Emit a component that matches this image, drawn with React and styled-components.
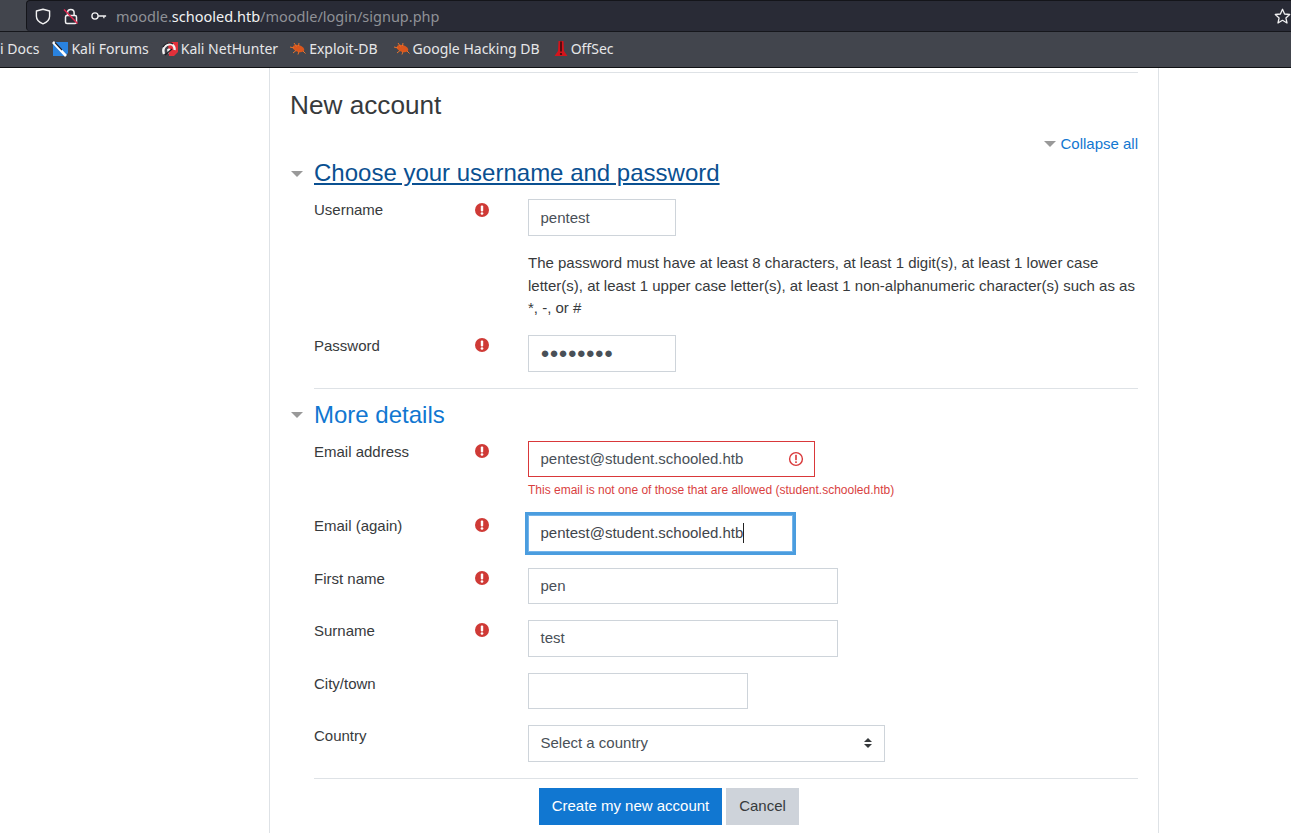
import React from "react";
import styled, { createGlobalStyle } from "styled-components";

const GlobalStyle = createGlobalStyle`
  html, body {
    margin: 0;
    padding: 0;
    height: 100%;
    overflow: hidden;
    background: #fff;
  }
  * { box-sizing: border-box; }
`;

const Page = styled.div`
  width: 1291px;
  height: 833px;
  overflow: hidden;
  display: flex;
  flex-direction: column;
  font-family: "Liberation Sans", Arial, sans-serif;
  font-size: 15px;
  color: #373a3c;
`;

/* browser chrome */
const Toolbar = styled.div`
  height: 32px;
  flex-shrink: 0;
  background: #42454d;
  padding-left: 26px;
  border-bottom: 1px solid #16171c;
`;
const UrlBar = styled.div`
  height: 31px;
  background: #292b36;
  border: 1px solid #14151a;
  border-bottom: none;
  border-right: none;
  border-radius: 4px 0 0 4px;
  display: flex;
  align-items: center;
  padding-left: 7px;
`;
const IconSlot = styled.span`
  display: flex;
  width: ${(p) => p.$w}px;
  justify-content: center;
  flex-shrink: 0;
`;
const Url = styled.div`
  margin-left: 9px;
  flex: 1;
  font-family: "Noto Sans", sans-serif;
  font-size: 14.5px;
  color: #8f9196;
  white-space: nowrap;
`;
const UrlHost = styled.span`
  color: #f2f2f3;
`;
const Bookmarks = styled.div`
  height: 36px;
  flex-shrink: 0;
  background: #42454d;
  border-bottom: 1px solid #101114;
  display: flex;
  align-items: center;
  overflow: hidden;
  padding-bottom: 2px;
`;
const Bookmark = styled.div`
  display: flex;
  align-items: center;
  gap: 3px;
  margin-left: ${(p) => p.$gap}px;
  font-family: "Noto Sans", sans-serif;
  font-size: 14px;
  color: #e6e7e9;
  white-space: nowrap;
`;

/* moodle page */
const Card = styled.main`
  margin-left: 269px;
  width: 890px;
  flex: 1;
  border-left: 1px solid #dee2e6;
  border-right: 1px solid #dee2e6;
  padding: 4px 20px 0;
`;
const TopRule = styled.hr`
  margin: 0;
  border: none;
  border-top: 1px solid #dee2e6;
`;
const PageTitle = styled.h2`
  margin: 17px 0 0;
  font-size: 26.2px;
  font-weight: 400;
  line-height: 30px;
  color: #373a3c;
`;
const CollapseRow = styled.div`
  display: flex;
  justify-content: flex-end;
  align-items: center;
  gap: 4px;
  margin-top: 12px;
  height: 22px;
  color: #1177d1;
`;
const Caret = styled.span`
  width: 0;
  height: 0;
  border-left: 6.5px solid transparent;
  border-right: 6.5px solid transparent;
  border-top: 6px solid #999;
  margin-top: 1px;
`;
const SectionHead = styled.div`
  display: flex;
  align-items: center;
  gap: 11px;
  margin-top: ${(p) => p.$top}px;
  height: 30px;
  padding-left: 1px;
`;
const SectionTitle = styled.h3`
  margin: 0;
  font-size: 24px;
  font-weight: 400;
  line-height: 30px;
  color: ${(p) => (p.$active ? "#0a5091" : "#1177d1")};
  text-decoration: ${(p) => (p.$active ? "underline" : "none")};
  text-underline-offset: 2px;
`;
const Row = styled.div`
  display: flex;
  margin-left: 24px;
  margin-top: ${(p) => p.$top}px;
`;
const Label = styled.div`
  width: 160.5px;
  line-height: 22px;
`;
const Req = styled.div`
  width: 53.5px;
  height: 21px;
  display: flex;
  align-items: center;
`;
const Field = styled.div`
  flex: 1;
  min-width: 0;
`;
const Input = styled.div`
  position: relative;
  width: ${(p) => p.$w}px;
  height: ${(p) => p.$h || 37}px;
  border: 1px solid #ced4da;
  background: #fff;
  padding: 0 11.5px ${(p) => (p.$h ? 0 : 1)}px;
  display: flex;
  align-items: center;
  color: #495057;
  white-space: nowrap;
`;
const ErrorInput = styled(Input)`
  border-color: #d9383a;
`;
const FocusInput = styled(Input)`
  border-color: #74b4ea;
  box-shadow: 0 0 0 3px #4b9ddf;
  color: #3f454b;
`;
const Dots = styled.span`
  font-size: 15px;
`;
const Cursor = styled.span`
  width: 1px;
  height: 20px;
  background: #222;
  flex-shrink: 0;
`;
const TrailIcon = styled.span`
  position: absolute;
  right: 10px;
  top: 9px;
  display: flex;
`;
const Help = styled.p`
  margin: 0;
  line-height: 22.5px;
  color: #373a3c;
`;
const ErrorText = styled.div`
  margin-top: 6px;
  font-size: 12px;
  line-height: 14px;
  color: #d93f3f;
  white-space: nowrap;
`;
const Rule = styled.hr`
  margin: ${(p) => p.$top}px 0 0 24px;
  border: none;
  border-top: 1px solid #dee2e6;
`;
const SelectBox = styled(Input)`
  justify-content: space-between;
  padding-right: 12px;
`;
const Buttons = styled.div`
  display: flex;
  gap: 4px;
  margin: 9px 0 0 249px;
`;
const Button = styled.button`
  height: 37px;
  width: ${(p) => p.$w}px;
  padding: 0 0 2px;
  border: none;
  font: inherit;
  background: ${(p) => (p.$primary ? "#1177d1" : "#ced3da")};
  color: ${(p) => (p.$primary ? "#fff" : "#373a3c")};
`;

/* icons */
const ReqIcon = () => (
  <svg width="14" height="14" viewBox="0 0 14 14">
    <circle cx="7" cy="7" r="7" fill="#cf3a36" />
    <rect x="5.8" y="2.6" width="2.4" height="5.8" rx="1" fill="#fff" />
    <circle cx="7" cy="10.5" r="1.35" fill="#fff" />
  </svg>
);

const Shield = () => (
  <svg width="16" height="17" viewBox="0 0 16 17" fill="none">
    <path d="M8 1.2 14.6 3v5.2c0 3.6-3 6.2-6.6 7.6C4.400 14.400 1.400 11.800 1.400 8.200V3z" stroke="#f1f1f2" strokeWidth="1.4" strokeLinejoin="round" />
  </svg>
);

const BrokenLock = () => (
  <svg width="16" height="17" viewBox="0 0 16 17" fill="none">
    <path d="M4.500 7V4.700a3.300 3.300 0 0 1 6.600 0V7" stroke="#f1f1f2" strokeWidth="1.500" />
    <rect x="2.500" y="7.500" width="11" height="8" rx="1.500" stroke="#f1f1f2" strokeWidth="1.500" />
    <path d="M1 1.500 14.500 15.500" stroke="#e22850" strokeWidth="1.500" />
  </svg>
);

const KeyIcon = () => (
  <svg width="18" height="10" viewBox="0 0 18 10" fill="none">
    <circle cx="4.500" cy="5" r="3.500" stroke="#f1f1f2" strokeWidth="1.500" />
    <path d="M8 5h9M14.500 5v2.500" stroke="#f1f1f2" strokeWidth="1.500" />
  </svg>
);

const Star = () => (
  <svg width="17" height="17" viewBox="0 0 17 17" fill="none">
    <path d="M8.500 1.300 10.600 6l5.100.5-3.800 3.400 1.100 5.100-4.500-2.700L4 15l1.100-5.100L1.300 6.500 6.400 6z" stroke="#f1f1f2" strokeWidth="1.300" strokeLinejoin="round" />
  </svg>
);

const ForumsIcon = () => (
  <svg width="16" height="16" viewBox="0 0 16 16">
    <path d="M3 1h13v11l-3 3H1V3z" fill="#2a83e0" />
    <path d="M1 1 8 8.500 14 15" stroke="#fff" strokeWidth="2.600" fill="none" />
    <path d="M3 1.500 10 9" stroke="#1b1b22" strokeWidth="1.100" fill="none" />
  </svg>
);

const HunterIcon = () => (
  <svg width="16" height="16" viewBox="0 0 16 16">
    <path d="M6 1h10v10l-4 4H7z" fill="#e2303a" />
    <path d="M2 13C0 8 3 3 8 3c3 0 5 3 4.500 6" fill="none" stroke="#f2f2f2" strokeWidth="2.400" />
    <path d="M1 6c2-4 7-5 10-3" fill="none" stroke="#1b1b22" strokeWidth="1.200" />
    <path d="M5 8.500c1.500-1.500 3-1 4 .5l-3 4z" fill="#f2f2f2" />
    <path d="M3 14 10 8" stroke="#1b1b22" strokeWidth="1.300" />
  </svg>
);

const BugIcon = () => (
  <svg width="16" height="13" viewBox="0 0 16 13">
    <ellipse cx="8.500" cy="6.500" rx="6" ry="3.300" fill="#d9561d" transform="rotate(18 8.500 6.500)" />
    <path d="M0 5 4 6M4 1l2.500 3.500M9 1 8.500 4M3 11l3-2.500M8 12.500l1-3M15.500 11.500 13 9" stroke="#e8742c" strokeWidth="1" />
  </svg>
);

const OffSecIcon = () => (
  <svg width="14" height="17" viewBox="0 0 14 17">
    <path d="M4.500 1h5l.5 10 3.500 5H.5L4 11z" fill="#d3141c" />
    <path d="M7 1.500v10" stroke="#3a0a0c" strokeWidth="1.600" />
    <circle cx="7" cy="14" r="1.100" fill="#3a0a0c" />
  </svg>
);

const ErrorCircle = () => (
  <svg width="16" height="16" viewBox="0 0 16 16" fill="none">
    <circle cx="8" cy="8" r="6.400" stroke="#d9383a" strokeWidth="1.400" />
    <rect x="7.200" y="3.800" width="1.600" height="5.400" fill="#d9383a" />
    <rect x="7.200" y="10.300" width="1.600" height="1.700" fill="#d9383a" />
  </svg>
);

const SortIcon = () => (
  <svg width="8" height="10" viewBox="0 0 8 10">
    <path d="M4 0 8 4H0zM0 6h8L4 10z" fill="#373a3c" />
  </svg>
);

export default function App() {
  return (
    <Page>
      <GlobalStyle />
      <Toolbar>
        <UrlBar>
          <IconSlot $w={17}><Shield /></IconSlot>
          <IconSlot $w={40}><BrokenLock /></IconSlot>
          <IconSlot $w={16}><KeyIcon /></IconSlot>
          <Url>
            moodle.<UrlHost>schooled.htb</UrlHost>/moodle/login/signup.php
          </Url>
          <IconSlot $w={18}><Star /></IconSlot>
        </UrlBar>
      </Toolbar>
      <Bookmarks>
        <Bookmark $gap={0}>i Docs</Bookmark>
        <Bookmark $gap={13}><ForumsIcon />Kali Forums</Bookmark>
        <Bookmark $gap={13}><HunterIcon />Kali NetHunter</Bookmark>
        <Bookmark $gap={12}><BugIcon />Exploit-DB</Bookmark>
        <Bookmark $gap={16}><BugIcon />Google Hacking DB</Bookmark>
        <Bookmark $gap={14}><OffSecIcon />OffSec</Bookmark>
      </Bookmarks>
      <Card>
        <TopRule />
        <PageTitle>New account</PageTitle>
        <CollapseRow><Caret />Collapse all</CollapseRow>
        <SectionHead $top={4}>
          <Caret />
          <SectionTitle $active>Choose your username and password</SectionTitle>
        </SectionHead>
        <Row $top={11}>
          <Label>Username</Label>
          <Req><ReqIcon /></Req>
          <Field><Input $w={148}>pentest</Input></Field>
        </Row>
        <Row $top={16}>
          <Label />
          <Req />
          <Field>
            <Help>
              The password must have at least 8 characters, at least 1 digit(s), at least 1 lower case letter(s), at least 1 upper case letter(s), at least 1 non-alphanumeric character(s) such as as *, -, or #
            </Help>
          </Field>
        </Row>
        <Row $top={15}>
          <Label>Password</Label>
          <Req><ReqIcon /></Req>
          <Field><Input $w={148}><Dots>●●●●●●●●</Dots></Input></Field>
        </Row>
        <Rule $top={16} />
        <SectionHead $top={11}>
          <Caret />
          <SectionTitle>More details</SectionTitle>
        </SectionHead>
        <Row $top={11}>
          <Label>Email address</Label>
          <Req><ReqIcon /></Req>
          <Field>
            <ErrorInput $w={287} $h={36}>
              pentest@student.schooled.htb
              <TrailIcon><ErrorCircle /></TrailIcon>
            </ErrorInput>
            <ErrorText>This email is not one of those that are allowed (student.schooled.htb)</ErrorText>
          </Field>
        </Row>
        <Row $top={18}>
          <Label>Email (again)</Label>
          <Req><ReqIcon /></Req>
          <Field>
            <FocusInput $w={265}>pentest@student.schooled.htb<Cursor /></FocusInput>
          </Field>
        </Row>
        <Row $top={16}>
          <Label>First name</Label>
          <Req><ReqIcon /></Req>
          <Field><Input $w={310} $h={36}>pen</Input></Field>
        </Row>
        <Row $top={16}>
          <Label>Surname</Label>
          <Req><ReqIcon /></Req>
          <Field><Input $w={310}>test</Input></Field>
        </Row>
        <Row $top={16}>
          <Label>City/town</Label>
          <Req />
          <Field><Input $w={220} $h={36} /></Field>
        </Row>
        <Row $top={16}>
          <Label>Country</Label>
          <Req />
          <Field>
            <SelectBox $w={357}>
              Select a country
              <SortIcon />
            </SelectBox>
          </Field>
        </Row>
        <Rule $top={16} />
        <Buttons>
          <Button $primary $w={183}>Create my new account</Button>
          <Button $w={73}>Cancel</Button>
        </Buttons>
      </Card>
    </Page>
  );
}
